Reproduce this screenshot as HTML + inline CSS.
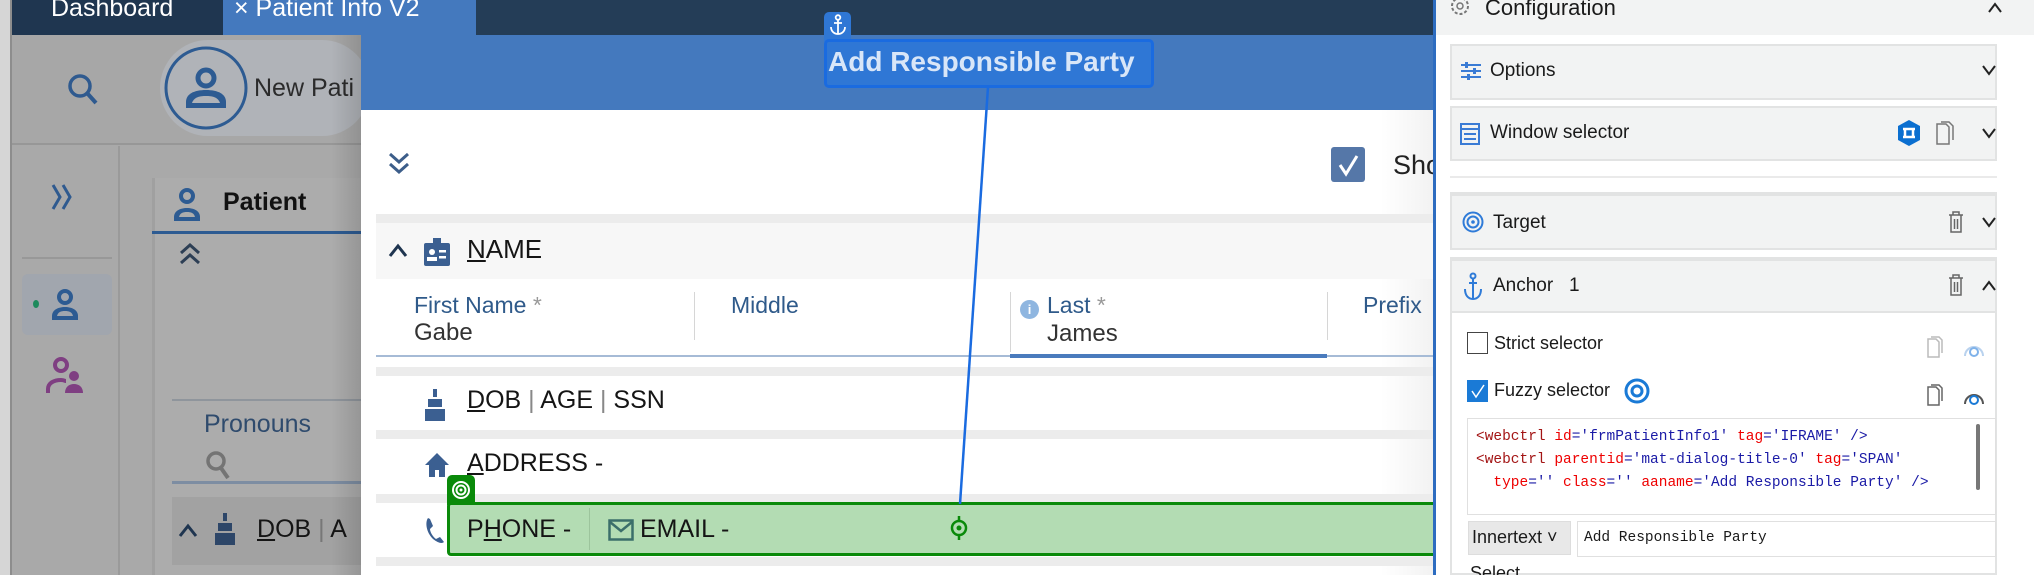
<!DOCTYPE html>
<html><head><meta charset="utf-8"><style>
*{margin:0;padding:0;box-sizing:border-box}
html,body{width:2034px;height:575px;overflow:hidden}
body{position:relative;background:#a9a9a9;font-family:"Liberation Sans",sans-serif}
.a{position:absolute}
.t{position:absolute;white-space:nowrap}
.band{position:absolute;background:#ececec}
.card{position:absolute;left:1450px;width:547px;background:#f2f3f3;border:2px solid #e2e3e3}
.mono{font-family:"Liberation Mono",monospace}
</style></head><body>
<!-- left strip -->
<div class="a" style="left:0;top:0;width:12px;height:575px;background:#d6d6d6;border-right:2px solid #8d8d8d"></div>
<!-- tab bar -->
<div class="a" style="left:12px;top:0;width:1421px;height:35px;background:#243d57"></div>
<div class="a" style="left:12px;top:0;width:211px;height:35px;background:#1f3650"></div>
<div class="t" style="left:51px;top:-6px;font-size:25px;color:#fff">Dashboard</div>
<div class="a" style="left:223px;top:0;width:253px;height:35px;background:#4479be"></div>
<div class="t" style="left:234px;top:-6px;font-size:25px;color:#fff">× Patient Info V2</div>

<!-- background app (dimmed) -->
<div class="a" style="left:12px;top:35px;width:349px;height:110px;background:#a7a7a7;border-bottom:2px solid #979797"></div>
<div class="a" style="left:160px;top:40px;width:210px;height:96px;border-radius:48px;background:#b0b3b8"></div>
<svg class="a" style="left:66px;top:72px" width="34" height="34" viewBox="0 0 34 34"><circle cx="14" cy="14" r="10" fill="none" stroke="#2f5a8f" stroke-width="3.5"/><path d="M21 21l9 10" stroke="#2f5a8f" stroke-width="4"/></svg>
<svg class="a" style="left:163px;top:45px" width="86" height="86" viewBox="0 0 86 86"><circle cx="43" cy="43" r="40" fill="none" stroke="#2d5b92" stroke-width="3"/><circle cx="43" cy="33" r="8" fill="none" stroke="#2d5b92" stroke-width="5"/><path d="M23 63v-6c0-8 8-12 20-12s20 4 20 12v6z" fill="#2d5b92"/><path d="M29 58c2-6 8-7 14-7s12 1 14 7z" fill="#b0b3b8"/></svg>
<div class="t" style="left:254px;top:74px;font-size:25px;color:#2b2b2b">New Pati</div>
<div class="a" style="left:118px;top:146px;width:2px;height:429px;background:#9a9a9a"></div>
<svg class="a" style="left:50px;top:182px" width="26" height="30" viewBox="0 0 26 30"><path d="M3 3l7 12-7 12M13 3l7 12-7 12" fill="none" stroke="#2f5a8f" stroke-width="3"/></svg>
<div class="a" style="left:22px;top:257px;width:90px;height:2px;background:#989898"></div>
<div class="a" style="left:22px;top:274px;width:90px;height:61px;border-radius:6px;background:#a1a6ae"></div>
<div class="a" style="left:33px;top:300px;width:6px;height:8px;border-radius:50%;background:#1d8a5c"></div>
<svg class="a" style="left:48px;top:288px" width="34" height="34" viewBox="0 0 34 34"><circle cx="17" cy="9" r="6" fill="none" stroke="#2d5b92" stroke-width="4"/><path d="M4 32v-4c0-6 6-9 13-9s13 3 13 9v4z" fill="#2d5b92"/><path d="M9 28c1-4 4-5 8-5s7 1 8 5z" fill="#a1a6ae"/></svg>
<svg class="a" style="left:46px;top:356px" width="40" height="40" viewBox="0 0 40 40"><circle cx="15" cy="9" r="6" fill="none" stroke="#7f3f82" stroke-width="4"/><path d="M2 37v-4c0-6 6-9 13-9 3 0 4 1 5 1" stroke="#7f3f82" stroke-width="4" fill="none"/><circle cx="28" cy="20" r="5" fill="#7f3f82"/><path d="M19 37c0-6 4-9 9-9s9 3 9 9z" fill="#7f3f82"/></svg>
<!-- patient card -->
<div class="a" style="left:152px;top:178px;width:209px;height:397px;background:#acacac;border-left:3px solid #a0a0a0"></div>
<svg class="a" style="left:172px;top:188px" width="30" height="34" viewBox="0 0 30 34"><circle cx="15" cy="8" r="6" fill="none" stroke="#2d5b92" stroke-width="4"/><path d="M2 33v-4c0-6 6-9 13-9s13 3 13 9v4z" fill="#2d5b92"/><path d="M7 29c1-4 4-5 8-5s7 1 8 5z" fill="#acacac"/></svg>
<div class="t" style="left:223px;top:188px;font-size:25px;font-weight:bold;color:#111">Patient</div>
<div class="a" style="left:152px;top:231px;width:209px;height:3px;background:#2d5b92"></div>
<svg class="a" style="left:178px;top:242px" width="24" height="24" viewBox="0 0 24 24"><path d="M3 11l9-8 9 8M3 21l9-8 9 8" fill="none" stroke="#2d3f55" stroke-width="3"/></svg>
<div class="a" style="left:172px;top:399px;width:189px;height:2px;background:#8f959c"></div>
<div class="t" style="left:204px;top:410px;font-size:25px;color:#2f4b6d">Pronouns</div>
<svg class="a" style="left:205px;top:450px" width="26" height="30" viewBox="0 0 26 30"><circle cx="11" cy="11" r="8" fill="none" stroke="#747474" stroke-width="3.5"/><path d="M16 18l7 10" stroke="#747474" stroke-width="4"/></svg>
<div class="a" style="left:172px;top:481px;width:189px;height:3px;background:#7d8da2"></div>
<div class="a" style="left:172px;top:497px;width:189px;height:68px;background:#a2a2a2"></div>
<svg class="a" style="left:178px;top:522px" width="20" height="16" viewBox="0 0 20 16"><path d="M2 14l8-10 8 10" fill="none" stroke="#1f3550" stroke-width="3"/></svg>
<svg class="a" style="left:214px;top:513px" width="22" height="32" viewBox="0 0 22 32"><rect x="9" y="0" width="4" height="8" fill="#2d4668"/><rect x="4" y="10" width="14" height="8" fill="#2d4668"/><rect x="1" y="20" width="20" height="12" fill="#2d4668"/></svg>
<div class="t" style="left:257px;top:515px;font-size:25px;color:#151515"><u>D</u>OB <span style="color:#777">|</span> A</div>
<!-- shadow -->
<div class="a" style="left:331px;top:35px;width:30px;height:540px;background:linear-gradient(90deg,rgba(0,0,0,0),rgba(0,0,0,0.13))"></div>

<!-- dialog -->
<div class="a" style="left:361px;top:35px;width:1072px;height:540px;background:#fff"></div>
<div class="a" style="left:361px;top:35px;width:1072px;height:75px;background:#4479be"></div>
<div class="a" style="left:1380px;top:110px;width:53px;height:465px;background:linear-gradient(90deg,rgba(0,0,0,0),rgba(0,0,0,0.05))"></div>
<svg class="a" style="left:387px;top:151px" width="24" height="24" viewBox="0 0 24 24"><path d="M3 3l9 8 9-8M3 13l9 8 9-8" fill="none" stroke="#3d5e8a" stroke-width="3"/></svg>
<div class="a" style="left:1331px;top:147px;width:34px;height:35px;border-radius:3px;background:#5577a8"></div>
<svg class="a" style="left:1331px;top:147px" width="34" height="35"><path d="M9 18l6 9 11-18" stroke="#fff" stroke-width="3" fill="none"/></svg>
<div class="t" style="left:1393px;top:150px;font-size:27px;color:#222">Sho</div>
<div class="band" style="left:376px;top:214px;width:1057px;height:9px"></div>
<div class="a" style="left:376px;top:223px;width:1057px;height:56px;background:#f7f7f7"></div>
<svg class="a" style="left:388px;top:242px" width="20" height="16" viewBox="0 0 20 16"><path d="M2 14l8-10 8 10" fill="none" stroke="#1f3550" stroke-width="3"/></svg>
<svg class="a" style="left:424px;top:238px" width="26" height="28" viewBox="0 0 26 28"><rect x="9" y="0" width="8" height="7" fill="#3b5f91"/><rect x="0" y="5" width="26" height="23" rx="2" fill="#3b5f91"/><circle cx="8" cy="14" r="3" fill="#fff"/><rect x="3" y="19" width="10" height="4" fill="#fff"/><rect x="15" y="12" width="7" height="2.5" fill="#fff"/><rect x="15" y="18" width="7" height="2.5" fill="#fff"/></svg>
<div class="t" style="left:467px;top:234px;font-size:26px;color:#151515"><u>N</u>AME</div>
<div class="t" style="left:414px;top:292px;font-size:23px;color:#2f5a8a">First Name <span style="color:#999">*</span></div>
<div class="t" style="left:414px;top:319px;font-size:24px;color:#333">Gabe</div>
<div class="a" style="left:694px;top:292px;width:1px;height:48px;background:#d6d6d6"></div>
<div class="t" style="left:731px;top:292px;font-size:23px;color:#2f5a8a">Middle</div>
<div class="a" style="left:1010px;top:292px;width:1px;height:60px;background:#d6d6d6"></div>
<div class="a" style="left:1020px;top:300px;width:19px;height:19px;border-radius:50%;background:#8fb6e0;color:#fff;font-size:13px;font-weight:bold;text-align:center;line-height:19px">i</div>
<div class="t" style="left:1047px;top:292px;font-size:23px;color:#2f5a8a">Last <span style="color:#999">*</span></div>
<div class="t" style="left:1047px;top:320px;font-size:24px;color:#333">James</div>
<div class="a" style="left:1327px;top:292px;width:1px;height:48px;background:#d6d6d6"></div>
<div class="t" style="left:1363px;top:292px;font-size:23px;color:#2f5a8a">Prefix</div>
<div class="a" style="left:376px;top:355px;width:1057px;height:2px;background:#a6bbd6"></div>
<div class="a" style="left:1010px;top:354px;width:317px;height:4px;background:#4a7bbd"></div>
<div class="band" style="left:376px;top:367px;width:1057px;height:9px"></div>
<svg class="a" style="left:424px;top:389px" width="22" height="32" viewBox="0 0 22 32"><rect x="9" y="0" width="4" height="8" fill="#3b5f91"/><rect x="4" y="10" width="14" height="8" fill="#3b5f91"/><rect x="1" y="20" width="20" height="12" fill="#3b5f91"/></svg>
<div class="t" style="left:467px;top:386px;font-size:25px;color:#151515"><u>D</u>OB <span style="color:#888;font-weight:normal">|</span> AGE <span style="color:#888">|</span> SSN</div>
<div class="band" style="left:376px;top:430px;width:1057px;height:9px"></div>
<svg class="a" style="left:424px;top:452px" width="26" height="26" viewBox="0 0 26 26"><path d="M13 1L1 13h4v12h6v-7h4v7h6V13h4z" fill="#3b5f91"/></svg>
<div class="t" style="left:467px;top:449px;font-size:25px;color:#151515"><u>A</u>DDRESS -</div>
<div class="band" style="left:376px;top:494px;width:1057px;height:9px"></div>
<svg class="a" style="left:424px;top:516px" width="26" height="28" viewBox="0 0 26 28"><path d="M4 2c-3 4-2 14 5 21 5 4 9 5 11 3l-4-5-4 2c-3-2-6-7-6-10l3-3-3-7z" fill="#3b5f91"/></svg>
<div class="band" style="left:376px;top:557px;width:1057px;height:9px"></div>
<!-- green highlight -->
<div class="a" style="left:447px;top:502px;width:1000px;height:54px;background:#b3dcb3;border:3px solid #0a8a0a;border-radius:4px"></div>
<div class="a" style="left:447px;top:475px;width:28px;height:30px;background:#0a8a0a;border-radius:5px 5px 0 0"></div>
<svg class="a" style="left:451px;top:479px" width="20" height="22" viewBox="0 0 20 22"><circle cx="10" cy="11" r="8" fill="none" stroke="#fff" stroke-width="2"/><circle cx="10" cy="11" r="4.5" fill="none" stroke="#fff" stroke-width="2"/><circle cx="10" cy="11" r="1.5" fill="#fff"/></svg>
<div class="t" style="left:467px;top:515px;font-size:25px;color:#151515">P<u>H</u>ONE -</div>
<div class="a" style="left:589px;top:508px;width:1px;height:42px;background:#9cc49c"></div>
<svg class="a" style="left:608px;top:519px" width="26" height="22" viewBox="0 0 26 22"><rect x="1.5" y="1.5" width="23" height="19" fill="none" stroke="#3b6e6a" stroke-width="2.5"/><path d="M2 3l11 9 11-9" fill="none" stroke="#3b6e6a" stroke-width="2.5"/></svg>
<div class="t" style="left:640px;top:515px;font-size:25px;color:#151515">EMAIL -</div>
<svg class="a" style="left:948px;top:516px" width="22" height="24" viewBox="0 0 22 24"><circle cx="11" cy="12" r="7" fill="none" stroke="#0a8a0a" stroke-width="2.5"/><circle cx="11" cy="12" r="2.5" fill="#0a8a0a"/><path d="M11 0v5M11 19v5" stroke="#0a8a0a" stroke-width="2.5"/></svg>
<!-- anchor label -->
<svg class="a" style="left:0;top:0" width="1433" height="575"><line x1="988" y1="87" x2="960" y2="504" stroke="#1a6be0" stroke-width="2.5"/></svg>
<div class="a" style="left:824px;top:12px;width:27px;height:30px;background:#2f77d5;border-radius:5px 5px 0 0"></div>
<svg class="a" style="left:828px;top:14px" width="20" height="22" viewBox="0 0 20 22"><circle cx="10" cy="3.5" r="2.3" fill="none" stroke="#fff" stroke-width="1.8"/><path d="M10 6v14M6 9h8M3 13c0 4 3 7 7 7s7-3 7-7" fill="none" stroke="#fff" stroke-width="1.8"/></svg>
<div class="a" style="left:824px;top:39px;width:330px;height:49px;background:#2f77d5;border:3px solid #1a6be0;border-radius:5px"></div>
<div class="t" style="left:828px;top:46px;font-size:28px;font-weight:bold;color:#d8e6f8">Add Responsible Party</div>

<!-- right panel -->
<div class="a" style="left:1433px;top:0;width:601px;height:575px;background:#fff;border-left:3px solid #2d6cc0"></div>
<div class="a" style="left:1436px;top:0;width:598px;height:35px;background:#f2f3f3"></div>
<svg class="a" style="left:1449px;top:0" width="22" height="18" viewBox="0 0 22 18"><circle cx="11" cy="6" r="8" fill="none" stroke="#777" stroke-width="2" stroke-dasharray="3 2"/><circle cx="11" cy="6" r="3" fill="none" stroke="#777" stroke-width="1.5"/></svg>
<div class="t" style="left:1485px;top:-5px;font-size:22px;color:#1a1a1a">Configuration</div>
<svg class="a" style="left:1987px;top:2px" width="16" height="12" viewBox="0 0 16 12"><path d="M2 10l6-8 6 8" fill="none" stroke="#222" stroke-width="2"/></svg>

<div class="card" style="top:44px;height:56px"></div>
<svg class="a" style="left:1460px;top:62px" width="22" height="18" viewBox="0 0 22 18"><path d="M1 3h20M1 9h20M1 15h20" stroke="#3a7bd5" stroke-width="2"/><rect x="5" y="0" width="3" height="6" fill="#3a7bd5"/><rect x="13" y="6" width="3" height="6" fill="#3a7bd5"/><rect x="7" y="12" width="3" height="6" fill="#3a7bd5"/></svg>
<div class="t" style="left:1490px;top:60px;font-size:19px;color:#1a1a1a">Options</div>
<svg class="a" style="left:1981px;top:64px" width="16" height="12" viewBox="0 0 16 12"><path d="M2 2l6 8 6-8" fill="none" stroke="#222" stroke-width="2"/></svg>

<div class="card" style="top:106px;height:55px"></div>
<svg class="a" style="left:1460px;top:123px" width="20" height="22" viewBox="0 0 20 22"><rect x="1" y="1" width="18" height="20" fill="none" stroke="#3a7bd5" stroke-width="2"/><path d="M1 6h18M4 11h12M4 16h12" stroke="#3a7bd5" stroke-width="2"/></svg>
<div class="t" style="left:1490px;top:122px;font-size:19px;color:#1a1a1a">Window selector</div>
<svg class="a" style="left:1896px;top:119px" width="26" height="28" viewBox="0 0 26 28"><path d="M13 1l11 6v14l-11 6-11-6V7z" fill="#0b6fd0"/><path d="M7 10h12M7 18h12M9 10v8M17 10v8" stroke="#fff" stroke-width="2.5"/></svg>
<svg class="a" style="left:1936px;top:121px" width="18" height="24" viewBox="0 0 18 24"><path d="M1 3h9l3 3v17H1z" fill="none" stroke="#777" stroke-width="1.5"/><path d="M5 1h8l4 4v14" fill="none" stroke="#777" stroke-width="1.5"/></svg>
<svg class="a" style="left:1981px;top:127px" width="16" height="12" viewBox="0 0 16 12"><path d="M2 2l6 8 6-8" fill="none" stroke="#222" stroke-width="2"/></svg>
<div class="a" style="left:1450px;top:176px;width:547px;height:2px;background:#eaeaea"></div>

<div class="card" style="top:192px;height:58px;border-top:4px solid #e2e3e3"></div>
<svg class="a" style="left:1462px;top:210px" width="22" height="24" viewBox="0 0 22 24"><circle cx="11" cy="12" r="9.5" fill="none" stroke="#2f7bd8" stroke-width="2"/><circle cx="11" cy="12" r="5.5" fill="none" stroke="#2f7bd8" stroke-width="2"/><circle cx="11" cy="12" r="1.8" fill="#2f7bd8"/></svg>
<div class="t" style="left:1493px;top:212px;font-size:19px;color:#1a1a1a">Target</div>
<svg class="a" style="left:1948px;top:211px" width="16" height="22" viewBox="0 0 16 22"><path d="M1 4h14M5 4V1h6v3M3 4v17h10V4M6.5 8v10M9.5 8v10" fill="none" stroke="#666" stroke-width="1.5"/></svg>
<svg class="a" style="left:1981px;top:216px" width="16" height="12" viewBox="0 0 16 12"><path d="M2 2l6 8 6-8" fill="none" stroke="#222" stroke-width="2"/></svg>

<div class="a" style="left:1450px;top:257px;width:547px;height:318px;background:#fff;border:2px solid #e2e3e3;border-top:4px solid #e2e3e3"></div>
<div class="a" style="left:1452px;top:261px;width:543px;height:52px;background:#f2f3f3;border-bottom:2px solid #e2e3e3"></div>
<svg class="a" style="left:1463px;top:272px" width="20" height="28" viewBox="0 0 20 28"><circle cx="10" cy="4" r="2.5" fill="none" stroke="#2f7bd8" stroke-width="2"/><path d="M10 7v20M6 11h8M2 17c0 6 3 10 8 10s8-4 8-10" fill="none" stroke="#2f7bd8" stroke-width="2"/></svg>
<div class="t" style="left:1493px;top:275px;font-size:19px;color:#1a1a1a">Anchor &nbsp;&nbsp;1</div>
<svg class="a" style="left:1948px;top:274px" width="16" height="22" viewBox="0 0 16 22"><path d="M1 4h14M5 4V1h6v3M3 4v17h10V4M6.5 8v10M9.5 8v10" fill="none" stroke="#666" stroke-width="1.5"/></svg>
<svg class="a" style="left:1981px;top:280px" width="16" height="12" viewBox="0 0 16 12"><path d="M2 10l6-8 6 8" fill="none" stroke="#222" stroke-width="2"/></svg>

<div class="a" style="left:1467px;top:332px;width:21px;height:22px;border:1.5px solid #444;background:#fff"></div>
<div class="t" style="left:1494px;top:333px;font-size:18px;color:#1a1a1a">Strict selector</div>
<svg class="a" style="left:1927px;top:336px" width="16" height="22" viewBox="0 0 16 22"><path d="M1 3h8l3 3v15H1z" fill="none" stroke="#bbb" stroke-width="1.5"/><path d="M4 1h8l3 3v13" fill="none" stroke="#bbb" stroke-width="1.5"/></svg>
<svg class="a" style="left:1962px;top:336px" width="24" height="22" viewBox="0 0 24 22"><path d="M3 20A9 9 0 1 1 21 20" fill="none" stroke="#b9d2ee" stroke-width="2"/><circle cx="12" cy="16" r="4" fill="none" stroke="#7fb2ea" stroke-width="2"/></svg>
<div class="a" style="left:1467px;top:380px;width:21px;height:22px;background:#1a7ad6"></div>
<svg class="a" style="left:1467px;top:380px" width="21" height="22"><path d="M5 11l4 6 8-12" stroke="#fff" stroke-width="1.5" fill="none"/></svg>
<div class="t" style="left:1494px;top:380px;font-size:18px;color:#1a1a1a">Fuzzy selector</div>
<svg class="a" style="left:1624px;top:378px" width="26" height="26" viewBox="0 0 26 26"><circle cx="13" cy="13" r="11" fill="none" stroke="#1a7ad6" stroke-width="3"/><circle cx="13" cy="13" r="5" fill="none" stroke="#1a7ad6" stroke-width="3"/></svg>
<svg class="a" style="left:1927px;top:384px" width="16" height="22" viewBox="0 0 16 22"><path d="M1 3h8l3 3v15H1z" fill="none" stroke="#666" stroke-width="1.5"/><path d="M4 1h8l3 3v13" fill="none" stroke="#666" stroke-width="1.5"/></svg>
<svg class="a" style="left:1962px;top:384px" width="24" height="22" viewBox="0 0 24 22"><path d="M3 20A9 9 0 1 1 21 20" fill="none" stroke="#555" stroke-width="2"/><circle cx="12" cy="16" r="4" fill="none" stroke="#1a7ad6" stroke-width="2"/></svg>

<div class="a" style="left:1467px;top:418px;width:529px;height:97px;border:1.5px solid #e0e0e0;background:#fff"></div>
<div class="a" style="left:1976px;top:424px;width:4px;height:66px;background:#777;border-radius:2px"></div>
<div class="t mono" style="left:1476px;top:426px;font-size:14.5px;line-height:23px;color:#1a1aa6"><span style="color:#a31515">&lt;webctrl</span> <span style="color:#e00">id</span>='frmPatientInfo1' <span style="color:#e00">tag</span>='IFRAME' /&gt;<br><span style="color:#a31515">&lt;webctrl</span> <span style="color:#e00">parentid</span>='mat-dialog-title-0' <span style="color:#e00">tag</span>='SPAN'<br>&nbsp;&nbsp;<span style="color:#e00">type</span>='' <span style="color:#e00">class</span>='' <span style="color:#e00">aaname</span>='Add Responsible Party' /&gt;</div>
<div class="a" style="left:1468px;top:521px;width:103px;height:34px;background:#e8e8e8;border:1.5px solid #ddd"></div>
<div class="t" style="left:1472px;top:527px;font-size:18px;color:#1a1a1a">Innertext ˅</div>
<div class="a" style="left:1577px;top:521px;width:419px;height:36px;border:1.5px solid #e0e0e0;background:#fff"></div>
<div class="t mono" style="left:1584px;top:530px;font-size:14.5px;color:#1a1a1a">Add Responsible Party</div>
<div class="t" style="left:1470px;top:563px;font-size:18px;color:#1a1a1a">Select</div>
</body></html>
